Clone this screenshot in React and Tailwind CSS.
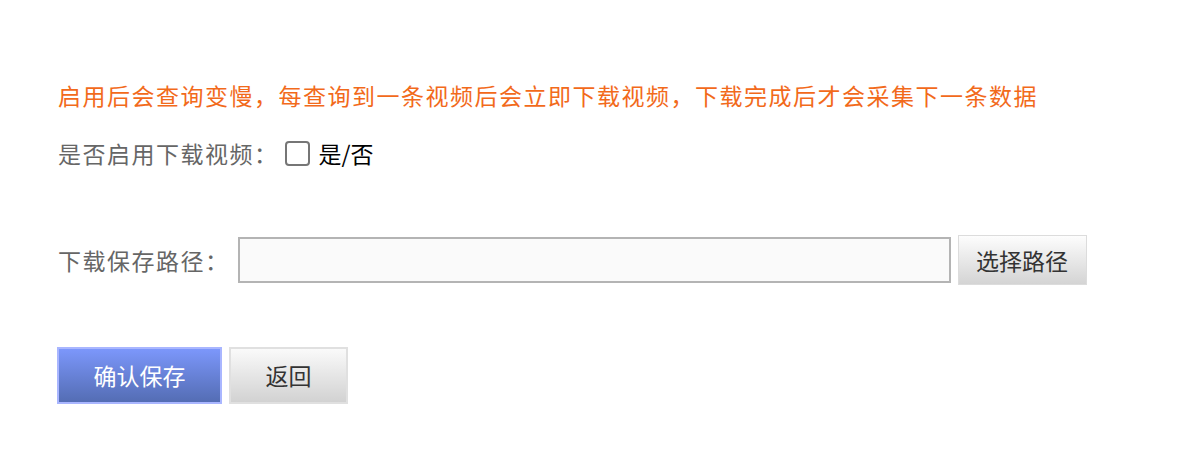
import { useState } from 'react'

const font = { fontFamily: '"Noto Sans CJK SC", "Noto Sans", sans-serif' }

export default function App() {
  const [enabled, setEnabled] = useState(false)
  const [path, setPath] = useState('')

  return (
    <div className="w-[1202px] h-[476px] bg-white pl-[58px] pt-[79px] text-[23px]" style={font}>
      <p className="leading-[32px] text-[#f26a1b] tracking-[1.5px]">
        启用后会查询变慢，每查询到一条视频后会立即下载视频，下载完成后才会采集下一条数据
      </p>

      <div className="mt-[26px] flex items-center h-[32px]">
        <span className="text-[#666] tracking-[1.5px]">是否启用下载视频：</span>
        <label className="ml-[6px] flex items-center cursor-pointer">
          <input
            type="checkbox"
            checked={enabled}
            onChange={(e) => setEnabled(e.target.checked)}
            className="appearance-none w-[25px] h-[25px] border-2 border-[#767676] rounded-[4px] bg-white"
          />
          <span className="ml-[9px] text-black">是/否</span>
        </label>
      </div>

      <div className="mt-[66px] flex items-center h-[50px]">
        <span className="text-[#666] tracking-[1.5px]">下载保存路径：</span>
        <input
          type="text"
          value={path}
          onChange={(e) => setPath(e.target.value)}
          className="ml-[8px] w-[713px] h-[46px] border-2 border-[#b4b4b4] bg-[#fafafa] outline-none px-2"
        />
        <button className="ml-[7px] w-[129px] h-[50px] border border-[#dcdcdc] bg-gradient-to-b from-[#fdfdfd] to-[#d4d4d4] text-[#333]">
          选择路径
        </button>
      </div>

      <div className="mt-[62px] flex gap-[7px] -ml-[1px]">
        <button className="w-[165px] h-[57px] border-2 border-[#a9b6ff] bg-gradient-to-b from-[#7c97fb] to-[#546db4] text-white">
          确认保存
        </button>
        <button className="w-[119px] h-[57px] border-2 border-[#e0e0e0] bg-gradient-to-b from-[#fafafa] to-[#d2d2d2] text-[#333]">
          返回
        </button>
      </div>
    </div>
  )
}
